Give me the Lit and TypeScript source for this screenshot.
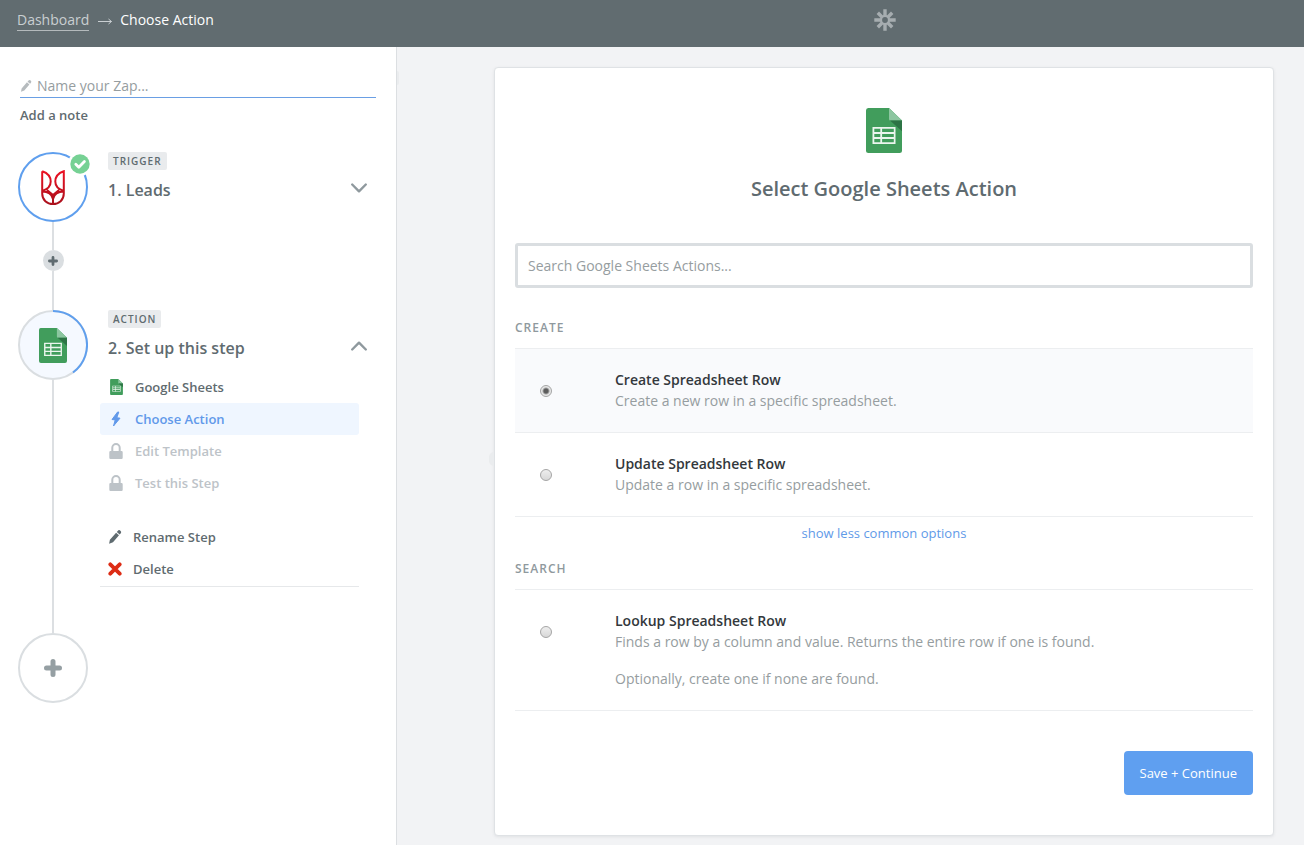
import { LitElement, html, svg, css } from "lit";
import { customElement, property, state } from "lit/decorators.js";

const ICONS: Record<string, { box: string; w: number; h: number; body: unknown }> = {
  sheets: {
    box: "0 0 36 45",
    w: 36,
    h: 45,
    body: svg`
      <path fill="#419d5c" d="M2.600 0H23l13 12.500v30a2.500 2.500 0 0 1-2.500 2.500h-31A2.500 2.500 0 0 1 0 42.500v-40A2.500 2.500 0 0 1 2.600 0z"/>
      <path fill="#8cc6a0" d="M23 0l13 12.600H24.500A1.500 1.500 0 0 1 23 11z"/>
      <path fill="#2d7445" d="M24 12.600h12v10.600z"/>
      <path fill="#ebf5ee" fill-rule="evenodd" d="M6.500 19h23v17h-23zM8.300 20.700V24h6v-3.300zm7.800 0V24h11.700v-3.300zM8.300 25.900v3.200h6v-3.200zm7.800 0v3.200h11.700v-3.200zM8.300 31v3.300h6V31zm7.800 0v3.300h11.700V31z"/>
    `,
  },
  bolt: {
    box: "0 0 16 16",
    w: 16,
    h: 16,
    body: svg`<path fill="currentColor" stroke="currentColor" stroke-linejoin="round" d="M9.600 1L4 8.500l3.200.4L5.500 15 12 7.200 8.800 6.700 10.800 1z"/>`,
  },
  lock: {
    box: "0 0 14 16",
    w: 14,
    h: 16,
    body: svg`<path fill="currentColor" d="M1.500 8H12.500a1.200 1.200 0 0 1 1.200 1.200v5.500a1.200 1.200 0 0 1-1.200 1.200H1.500A1.200 1.200 0 0 1 .3 14.700V9.200A1.200 1.200 0 0 1 1.500 8z"/><path fill="none" stroke="currentColor" stroke-width="2" d="M3.300 9V4.800a3.700 3.700 0 0 1 7.400 0V9"/>`,
  },
  pencil: {
    box: "0 0 14 14",
    w: 14,
    h: 14,
    body: svg`<path fill="currentColor" d="M9.700.9a1.900 1.900 0 0 1 2.900 2.500l-.9 1L8.800 1.900zM8.100 2.700L11 5.200l-6 7-3.900 1.600.800-4z"/>`,
  },
  cross: {
    box: "0 0 14 14",
    w: 14,
    h: 14,
    body: svg`<path fill="none" stroke="#dd2c15" stroke-width="3.800" stroke-linecap="round" d="M2.300 2.300l9.400 9.400M11.700 2.300l-9.400 9.400"/>`,
  },
  down: {
    box: "0 0 18 12",
    w: 18,
    h: 12,
    body: svg`<path fill="none" stroke="#8f999e" stroke-width="2.400" stroke-linecap="round" stroke-linejoin="round" d="M2.200 2.500L9 9.300l6.800-6.800"/>`,
  },
  up: {
    box: "0 0 18 12",
    w: 18,
    h: 12,
    body: svg`<path fill="none" stroke="#8f999e" stroke-width="2.400" stroke-linecap="round" stroke-linejoin="round" d="M2.200 9.500L9 2.700l6.800 6.800"/>`,
  },
  plus: {
    box: "0 0 18 18",
    w: 18,
    h: 18,
    body: svg`<path fill="none" stroke="currentColor" stroke-width="5" stroke-linecap="round" d="M9 2.500v13M2.500 9h13"/>`,
  },
  rabbit: {
    box: "0 0 24 35",
    w: 24,
    h: 35,
    body: svg`
      <linearGradient id="rabbit-red" x1="0" y1="0" x2="0" y2="35" gradientUnits="userSpaceOnUse">
        <stop offset="0" stop-color="#ee1123"/><stop offset="1" stop-color="#a8101c"/>
      </linearGradient>
      <path fill="none" stroke="url(#rabbit-red)" stroke-width="2" d="M1.200 1.200V23.500C1.200 30 6 34 12 34s10.800-4 10.800-10.500V1.200C17.500 3 14.300 6.800 14.300 11.500c0 4.500 2.700 7.700 8.500 9.500M1.200 1.200C6.500 3 9.700 6.800 9.700 11.500c0 4.500-2.700 7.700-8.500 9.500M1.200 21.500C7.500 21.500 11 24.500 12 29c1-4.500 4.500-7.500 10.800-7.500M6 20l6 5 6-5M12 28v6"/>
    `,
  },
  asterisk: {
    box: "0 0 22 22",
    w: 22,
    h: 22,
    body: svg`<path fill="none" stroke="#a6adb0" stroke-width="3.400" d="M11 .3v7.500M11 14.200v7.500M.3 11h7.500M14.200 11h7.500M3.800 3.800l4.700 4.700M13.500 13.500l4.700 4.700M3.800 18.200l4.700-4.700M13.500 8.500l4.700-4.700"/><circle cx="11" cy="11" r="3.900" fill="none" stroke="#a6adb0" stroke-width="2"/>`,
  },
  check: {
    box: "0 0 20 20",
    w: 20,
    h: 20,
    body: svg`<circle cx="10" cy="10" r="9.700" fill="#76d194"/><path fill="none" stroke="#fff" stroke-width="2.800" stroke-linecap="round" stroke-linejoin="round" d="M5.800 10.200l3 3 5.600-5.700"/>`,
  },
};

function icon(name: string, width?: number) {
  const i = ICONS[name];
  const w = width ?? i.w;
  return html`<svg class="icon" viewBox=${i.box} width=${w} height=${Math.round((w * i.h) / i.w)} aria-hidden="true">${i.body}</svg>`;
}

const base = css`
  *, *::before, *::after { box-sizing: border-box; }
  button, input { font: inherit; color: inherit; }
  button { margin: 0; padding: 0; border: 0; background: none; cursor: pointer; text-align: left; }
  .icon { display: block; flex: none; }
`;

@customElement("zap-header")
export class ZapHeader extends LitElement {
  static styles = [base, css`
    :host { display: block; background: #616c70; }
    .bar { display: grid; grid-template-columns: 495px 1fr; align-items: start; padding: 9px 29px 0 0; height: 47px; }
    .crumbs { display: flex; align-items: center; gap: 7px; padding-left: 17px; line-height: 22px; font-size: 14px; color: #fff; }
    .home { color: #c9cfd2; text-decoration: none; line-height: 20px; border-bottom: 1px solid #b4babc; }
    .here { font-weight: 500; }
    .logo { display: flex; justify-content: center; }
  `];
  render() {
    return html`<header class="bar">
      <nav class="crumbs" aria-label="Breadcrumb">
        <a class="home" href="#dashboard">Dashboard</a>
        <svg class="icon" width="17" height="9" viewBox="0 0 17 9" aria-hidden="true"><path fill="none" stroke="#c9cfd2" d="M2 5.500h13.500M12.500 3l3 2.500-3 2.500"/></svg>
        <span class="here">Choose Action</span>
      </nav>
      <div class="logo">${icon("asterisk")}</div>
    </header>`;
  }
}

interface Item { icon: string; size: number; label: string; mode?: string }

const STEP_ITEMS: Item[] = [
  { icon: "sheets", size: 13, label: "Google Sheets" },
  { icon: "bolt", size: 16, label: "Choose Action", mode: "active" },
  { icon: "lock", size: 14, label: "Edit Template", mode: "locked" },
  { icon: "lock", size: 14, label: "Test this Step", mode: "locked" },
];

@customElement("zap-sidebar")
export class ZapSidebar extends LitElement {
  static styles = [base, css`
    :host { display: block; position: relative; background: #fff; border-right: 1px solid #dcdfe2; padding: 27px 20px 40px 18px; color: #5f6b70; }
    .handle { position: absolute; top: 24px; right: -3px; width: 2px; height: 14px; border-radius: 0 2px 2px 0; background: #eaecee; }
    .name { display: flex; align-items: center; gap: 5px; height: 24px; margin-left: 2px; border-bottom: 1px solid #6a9fe4; color: #b6bbbe; }
    .name-input { flex: 1; min-width: 0; border: 0; padding: 0; outline: 0; font-size: 14px; background: none; }
    .name-input::placeholder { color: #969da0; opacity: 1; }
    .note { display: block; margin: 7px 0 27px 2px; font-size: 13px; line-height: 20px; font-weight: 550; }
    .steps { list-style: none; margin: 0; padding: 0; }
    .step { display: grid; grid-template-columns: 70px 1fr; column-gap: 20px; }
    .rail { display: flex; flex-direction: column; align-items: center; }
    .disc { position: relative; display: grid; place-items: center; width: 70px; height: 70px; }
    .disc > * { grid-area: 1 / 1; }
    .badge { position: absolute; top: 0; right: -4px; padding: 2px; border-radius: 50%; background: #fff; }
    .line { flex: 1; width: 2px; background: #dcdfe2; }
    .short { flex: none; height: 28px; }
    .long { min-height: 39px; }
    .insert { display: grid; place-items: center; width: 21px; height: 21px; border-radius: 50%; background: #dadee1; color: #5f6b70; }
    .add { display: grid; place-items: center; width: 70px; height: 70px; border: 2px solid #dadee1; border-radius: 50%; color: #959fa3; }
    .tag { display: table; height: 18px; padding: 0 5px; border-radius: 2px; background: #e9ebed; font-size: 10px; line-height: 18px; letter-spacing: 1px; font-weight: 550; }
    .head { display: flex; width: 100%; align-items: center; justify-content: space-between; height: 24px; margin-top: 8px; padding-right: 8px; }
    .head .icon { margin-bottom: 4px; }
    .title { margin: 0; font-size: 16px; line-height: 24px; font-weight: 550; }
    .menu { list-style: none; margin: 11px 17px 0 -8px; padding: 0; font-size: 13px; font-weight: 550; }
    .item { display: flex; width: 100%; align-items: center; gap: 11px; height: 32px; padding: 0 8px; border-radius: 3px; }
    .glyph { display: grid; place-items: center; width: 16px; }
    .active { background: #eff6ff; color: #6199ea; }
    .locked { color: #bdc3c8; }
    .tools { margin-top: 22px; margin-bottom: 46px; padding-bottom: 1px; border-bottom: 1px solid #e6e8ea; }
    .tools .item { padding-left: 7px; gap: 10px; }
  `];
  render() {
    return html`
      <span class="handle"></span>
      <div class="name">
        ${icon("pencil", 12)}
        <input class="name-input" aria-label="Zap name" placeholder="Name your Zap..." />
      </div>
      <button class="note">Add a note</button>
      <ol class="steps">
        <li class="step">
          <div class="rail">
            <div class="disc">
              <svg width="70" height="70" viewBox="0 0 70 70" aria-hidden="true"><circle cx="35" cy="35" r="34" fill="#fff" stroke="#5f9fee" stroke-width="2"/></svg>
              ${icon("rabbit", 24)}
              <span class="badge">${icon("check", 20)}</span>
            </div>
            <span class="line short"></span>
            <button class="insert" aria-label="Insert step">${icon("plus", 10)}</button>
            <span class="line long"></span>
          </div>
          <div>
            <span class="tag">TRIGGER</span>
            <button class="head"><span class="title">1. Leads</span>${icon("down", 18)}</button>
          </div>
        </li>
        <li class="step">
          <div class="rail">
            <div class="disc">
              <svg width="70" height="70" viewBox="0 0 70 70" aria-hidden="true"><circle cx="35" cy="35" r="34" fill="#f5f9ff" stroke="#dadee1" stroke-width="2"/><path fill="none" stroke="#5f9fee" stroke-width="2" d="M35 1a34 34 0 0 1 20 61.500"/></svg>
              ${icon("sheets", 28)}
            </div>
            <span class="line"></span>
          </div>
          <div>
            <span class="tag">ACTION</span>
            <button class="head"><span class="title">2. Set up this step</span>${icon("up", 18)}</button>
            <ul class="menu">
              ${STEP_ITEMS.map((i) => html`<li><button class="item ${i.mode ?? ""}" ?disabled=${i.mode === "locked"}>
                <span class="glyph">${icon(i.icon, i.size)}</span>${i.label}</button></li>`)}
            </ul>
            <ul class="menu tools">
              <li><button class="item"><span class="glyph">${icon("pencil", 14)}</span>Rename Step</button></li>
              <li><button class="item"><span class="glyph">${icon("cross", 14)}</span>Delete</button></li>
            </ul>
          </div>
        </li>
      </ol>
      <button class="add" aria-label="Add step">${icon("plus", 18)}</button>
    `;
  }
}

interface Choice { id: string; title: string; text: string[] }

@customElement("action-option")
export class ActionOption extends LitElement {
  @property({ attribute: false }) choice!: Choice;
  @property({ type: Boolean }) checked = false;
  static styles = [base, css`
    :host { display: block; }
    .row { display: grid; grid-template-columns: 100px 1fr; padding: 20px 0 21px; border-bottom: 1px solid #eceef0; font-size: 14px; line-height: 21px; color: #969da0; cursor: pointer; }
    .on { background: #f9fafc; }
    .radio { appearance: none; width: 12px; height: 12px; margin: 16px 0 0 25px; border: 1px solid #a5a5a5; border-radius: 50%; background: linear-gradient(#eee, #d8d8d8); }
    .radio:checked { background: radial-gradient(circle, #5c5c5c 2px, #e8e8e8 4px); }
    .title { display: block; font-weight: 550; color: #33383c; }
    .text { margin: 0; }
    .text + .text { margin-top: 16px; }
  `];
  render() {
    return html`<label class="row ${this.checked ? "on" : ""}">
      <input class="radio" type="radio" name="action" .checked=${this.checked}
        @change=${() => this.dispatchEvent(new CustomEvent("pick", { detail: this.choice.id }))} />
      <div><span class="title">${this.choice.title}</span>${this.choice.text.map((t) => html`<p class="text">${t}</p>`)}</div>
    </label>`;
  }
}

const CREATE: Choice[] = [
  { id: "create", title: "Create Spreadsheet Row", text: ["Create a new row in a specific spreadsheet."] },
  { id: "update", title: "Update Spreadsheet Row", text: ["Update a row in a specific spreadsheet."] },
];
const SEARCH: Choice[] = [
  { id: "lookup", title: "Lookup Spreadsheet Row", text: ["Finds a row by a column and value. Returns the entire row if one is found.", "Optionally, create one if none are found."] },
];

@customElement("action-picker")
export class ActionPicker extends LitElement {
  @state() private selected = "create";
  static styles = [base, css`
    :host { display: block; position: relative; background: #fff; border: 1px solid #dfe2e5; border-radius: 4px; box-shadow: 0 1px 3px rgba(95, 107, 112, 0.12); padding: 40px 20px; }
    .handle { position: absolute; top: 50%; left: -6px; width: 5px; height: 14px; border-radius: 7px 0 0 7px; background: #eaecee; }
    .brand { display: flex; justify-content: center; }
    .heading { margin: 22px 0 41px; font-size: 20px; line-height: 27px; font-weight: 600; text-align: center; color: #5f6b70; }
    .search { display: block; width: 100%; height: 45px; padding: 0 10px; border: 3px solid #dadee1; border-radius: 3px; outline: 0; font-size: 14px; background: #fff; }
    .search::placeholder { color: #969da0; opacity: 1; }
    .group { margin: 0; padding-bottom: 11px; border-bottom: 1px solid #eceef0; font-size: 12px; line-height: 18px; font-weight: 600; letter-spacing: 1px; color: #8f999e; }
    .first { margin-top: 31px; }
    .less { display: block; margin: 7px auto 18px; font-size: 13px; line-height: 18px; color: #5f9ae8; }
    .footer { display: flex; justify-content: flex-end; padding-top: 40px; }
    .save { height: 44px; padding: 0 16px; border-radius: 4px; background: #5f9ff0; color: #fff; font-size: 13px; font-weight: 500; }
  `];
  private options(list: Choice[]) {
    return list.map((c) => html`<action-option .choice=${c} ?checked=${this.selected === c.id}
      @pick=${(e: CustomEvent<string>) => (this.selected = e.detail)}></action-option>`);
  }
  render() {
    return html`
      <span class="handle"></span>
      <div class="brand">${icon("sheets", 36)}</div>
      <h1 class="heading">Select Google Sheets Action</h1>
      <input class="search" type="text" aria-label="Search Google Sheets Actions" placeholder="Search Google Sheets Actions..." />
      <h2 class="group first">CREATE</h2>
      ${this.options(CREATE)}
      <button class="less">show less common options</button>
      <h2 class="group">SEARCH</h2>
      ${this.options(SEARCH)}
      <div class="footer"><button class="save">Save + Continue</button></div>
    `;
  }
}

@customElement("app-root")
export class AppRoot extends LitElement {
  static styles = [base, css`
    :host { display: flex; flex-direction: column; min-height: 100vh; background: #f2f3f5; font-family: "Open Sans", "Noto Sans", sans-serif; }
    .body { flex: 1; display: grid; grid-template-columns: 397px 1fr; align-items: stretch; }
    .main { padding: 20px 30px 9px 97px; }
  `];
  render() {
    return html`
      <zap-header></zap-header>
      <div class="body">
        <zap-sidebar></zap-sidebar>
        <main class="main"><action-picker></action-picker></main>
      </div>
    `;
  }
}
